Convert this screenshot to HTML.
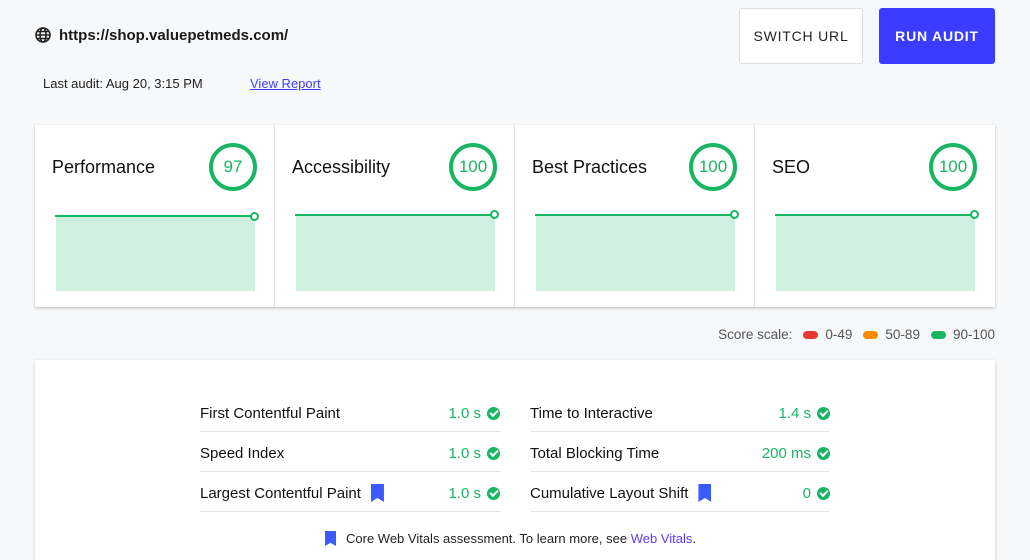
<!DOCTYPE html>
<html><head><meta charset="utf-8"><style>
*{box-sizing:border-box;margin:0;padding:0}
body{width:1030px;height:553px;overflow:hidden;background:#f7f8fa;font-family:"Liberation Sans",sans-serif;color:#111;position:relative}
.a{position:absolute}
.url{left:59px;top:27px;font-size:15px;font-weight:bold;color:#1a1a1a}
.btn{top:8px;height:56px;font-size:14px;letter-spacing:0.8px;display:flex;align-items:center;justify-content:center;border-radius:3px}
.cards{left:35px;top:125px;width:960px;height:182px;background:#fff;box-shadow:0 1px 3px rgba(0,0,0,.25);display:flex}
.card{width:240px;height:182px;position:relative;border-right:1px solid #ddd}
.card:last-child{border-right:none}
.card .t{position:absolute;left:17px;top:32px;font-size:18px;color:#111}
.ring{position:absolute;left:174px;top:18px;width:48px;height:48px;border:4px solid #18b663;border-radius:50%;display:flex;align-items:center;justify-content:center;color:#18b663;font-size:17px}
.fill{position:absolute;left:21px;top:92px;width:199px;height:74px;background:#cfefdf}
.line{position:absolute;left:20px;top:89px;width:200px;height:2px;background:#18b663}
.dot{position:absolute;left:215px;top:85px;width:9px;height:9px;border:2px solid #18b663;background:#fff;border-radius:50%}
.panel{left:35px;top:360px;width:960px;height:200px;background:#fff;box-shadow:0 1px 3px rgba(0,0,0,.2)}
.row{position:absolute;width:300px;height:40px;border-bottom:1px solid #e3e3e3;display:flex;align-items:center;padding-top:3px;font-size:15px}
.row .v{margin-left:auto;color:#18b663;margin-right:6px}
.chk{width:13px;height:13px;border-radius:50%;background:#18b663;position:relative}
.chk:after{content:"";position:absolute;left:3px;top:3px;width:6px;height:3px;border-left:2px solid #fff;border-bottom:2px solid #fff;transform:rotate(-45deg)}
.bm{display:inline-block;width:13px;height:18px;background:#3b5bfd;margin-left:10px;clip-path:polygon(0 0,100% 0,100% 100%,50% 78%,0 100%)}
.sc{display:inline-block;width:15px;height:8px;border-radius:4px;margin:0 7px 0 11px;vertical-align:middle}
</style></head><body>
<svg class="a" style="left:35px;top:27px" width="16" height="16" viewBox="0 0 16 16" fill="none" stroke="#222" stroke-width="1.6"><circle cx="8" cy="8" r="7"/><ellipse cx="8" cy="8" rx="3" ry="7"/><path d="M1 8h14M2 4.5h12M2 11.5h12"/></svg>
<div class="a url">https://shop.valuepetmeds.com/</div>
<div class="a" style="left:43px;top:76px;font-size:13px;color:#222">Last audit: Aug 20, 3:15 PM</div>
<div class="a" style="left:250px;top:76px;font-size:13px;color:#3d3dff;text-decoration:underline">View Report</div>
<div class="a btn" style="left:739px;width:124px;background:#fff;border:1px solid #ddd;color:#222">SWITCH URL</div>
<div class="a btn" style="left:879px;width:116px;background:#3a3dff;color:#fff;font-weight:bold">RUN AUDIT</div>
<div class="a cards">
<div class="card"><div class="t">Performance</div><div class="ring">97</div><div class="fill"></div><div class="line" style="top:90px"></div><div class="dot" style="top:87px"></div></div>
<div class="card"><div class="t">Accessibility</div><div class="ring">100</div><div class="fill" style="top:90px;height:76px"></div><div class="line"></div><div class="dot"></div></div>
<div class="card"><div class="t">Best Practices</div><div class="ring">100</div><div class="fill" style="top:90px;height:76px"></div><div class="line"></div><div class="dot"></div></div>
<div class="card"><div class="t">SEO</div><div class="ring">100</div><div class="fill" style="top:90px;height:76px"></div><div class="line"></div><div class="dot"></div></div>
</div>
<div class="a" style="right:35px;top:327px;font-size:13.5px;color:#555">Score scale:<span class="sc" style="background:#e53935"></span>0-49<span class="sc" style="background:#fb8c00"></span>50-89<span class="sc" style="background:#18b663"></span>90-100</div>
<div class="a panel"></div>
<div class="a row" style="left:200px;top:392px">First Contentful Paint<span class="v">1.0 s</span><span class="chk"></span></div>
<div class="a row" style="left:200px;top:432px">Speed Index<span class="v">1.0 s</span><span class="chk"></span></div>
<div class="a row" style="left:200px;top:472px">Largest Contentful Paint<span class="bm"></span><span class="v">1.0 s</span><span class="chk"></span></div>
<div class="a row" style="left:530px;top:392px">Time to Interactive<span class="v">1.4 s</span><span class="chk"></span></div>
<div class="a row" style="left:530px;top:432px">Total Blocking Time<span class="v">200 ms</span><span class="chk"></span></div>
<div class="a row" style="left:530px;top:472px">Cumulative Layout Shift<span class="bm"></span><span class="v">0</span><span class="chk"></span></div>
<div class="a" style="left:325px;top:531px;font-size:13px;color:#222;display:flex;align-items:center"><span class="bm" style="margin:0 10px 0 0;width:11px;height:15px"></span>Core Web Vitals assessment. To learn more, see&nbsp;<span style="color:#5b3dff">Web Vitals</span>.</div>
</body></html>
